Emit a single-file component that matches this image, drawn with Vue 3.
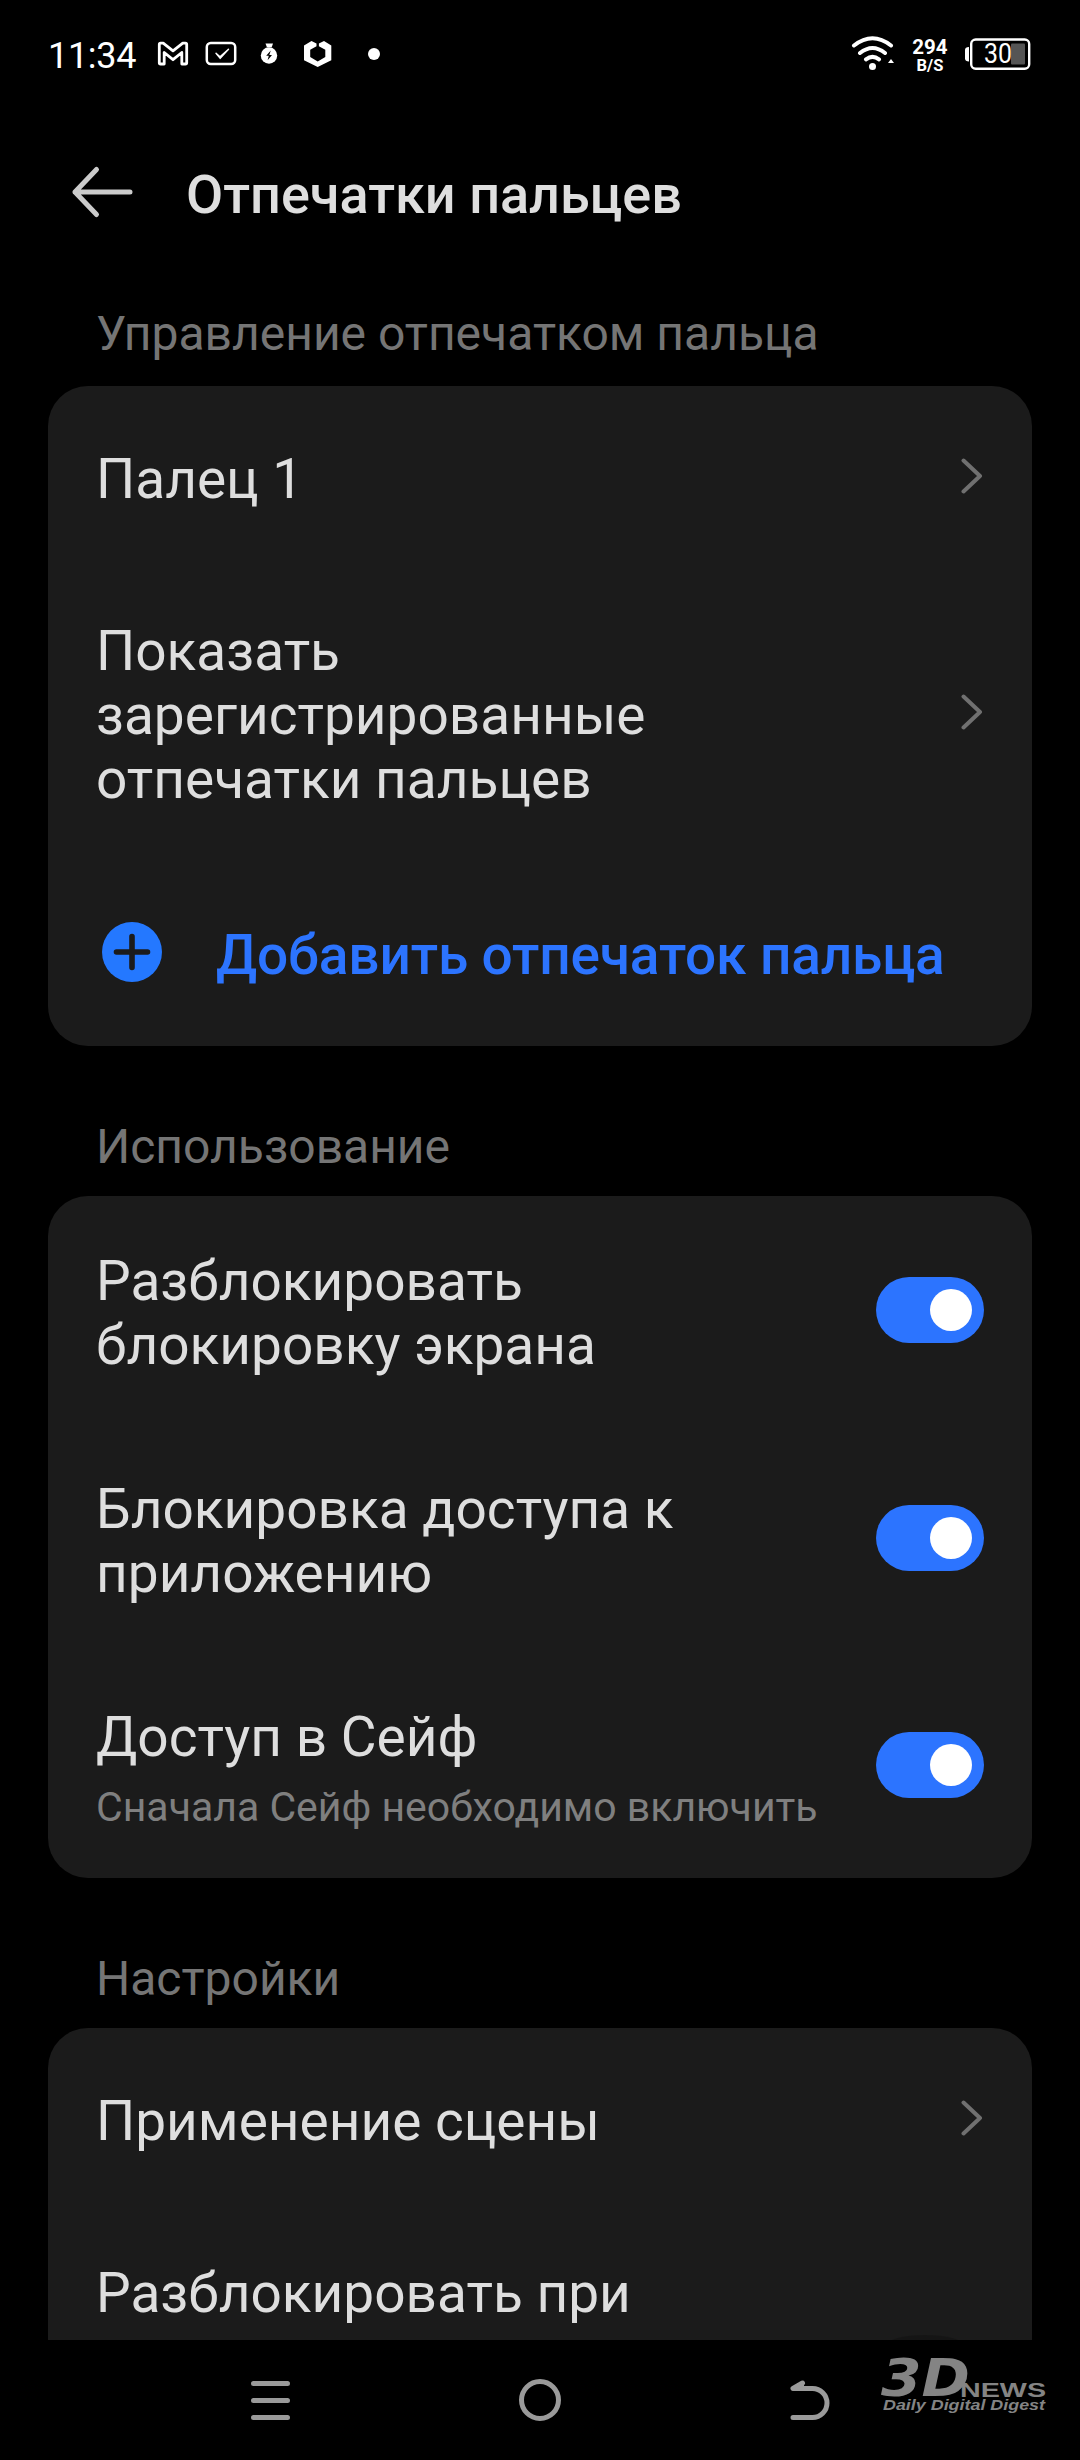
<template>
  <div class="screen">
    <!-- Status bar -->
    <div class="status-bar">
      <span class="time">11:34</span>
      <svg class="notifications" width="240" height="40" viewBox="150 34 240 40" fill="none" stroke="#fff">
        <path
          d="M159.3 44.5q0-1.3 1.3-1.3h2.6l9.8 7.7 9.8-7.7h2.6q1.3 0 1.3 1.3v18.2q0 1.3-1.3 1.3h-3.6V52.5L173 59.7l-8.8-7.2V64h-3.6q-1.3 0-1.3-1.3z"
          stroke-width="2.8"
          stroke-linejoin="round"
        />
        <rect x="206.8" y="43" width="28.4" height="21" rx="4" stroke-width="2.5" />
        <path d="M216 53.2l4 3.6 8.5-7.6-8.3 9.2z" fill="#fff" stroke-width="1.4" stroke-linejoin="round" />
        <g fill="#fff" stroke="none">
          <path d="M265.5 43.5h7.5l-1.3 3.7h-4.8z" />
          <circle cx="269" cy="55.5" r="8.2" />
          <path d="M270.8 50.5l-4.6 5.2h2.6l-1.2 4.6 4.4-5.4h-2.7z" fill="#000" />
          <path d="M311.5 41l5 2.6v2.6l-6.3 3.6v7.2l7.5 4.4 7.6-4.4v-7.2l-6.4-3.6v-2.6l5.1-2.6 7.3 4.4v14.8L317.7 67 304 60.2V45.4z" />
          <circle cx="374" cy="54" r="6" />
        </g>
      </svg>
      <div class="spacer"></div>
      <svg class="wifi" width="46" height="40" viewBox="850 34 46 40" fill="none" stroke="#fff" stroke-width="4">
        <path d="M854 45.5q18.500-14.500 37 0M860 53q12.500-10 25 0M866 59.300q6.500-4.800 13 0" stroke-linecap="round" />
        <circle cx="872.5" cy="66.5" r="3.5" fill="#fff" stroke="none" />
        <path d="M888 63l3-4 3 4z" fill="#fff" stroke="none" />
      </svg>
      <div class="speed">
        <span class="speed-value">294</span>
        <span class="speed-unit">B/S</span>
      </div>
      <svg class="battery" width="66" height="34" viewBox="965 37 66 34">
        <path d="M969 47v14.5q-4 0-4-3V50q0-3 4-3z" fill="#fff" />
        <rect x="1011" y="43.5" width="14" height="21" rx="1" fill="#555" />
        <rect x="971.2" y="39.5" width="58" height="29.2" rx="4.5" fill="none" stroke="#fff" stroke-width="2.4" />
        <text x="984" y="63" class="battery-text" textLength="28" lengthAdjust="spacingAndGlyphs">30</text>
      </svg>
    </div>

    <!-- Header -->
    <header class="header">
      <svg width="62" height="54" viewBox="0 0 62 54" class="back">
        <path d="M59 27H4M25.5 4.5L4 27l21.5 22.5" />
      </svg>
      <h1>Отпечатки пальцев</h1>
    </header>

    <!-- Settings sections -->
    <main class="content">
      <section v-for="section in sections" :key="section.title" class="section">
        <h2>{{ section.title }}</h2>
        <div class="card">
          <div v-for="row in section.rows" :key="row.label" :class="['row', row.type]">
            <svg v-if="row.type === 'add'" class="plus" width="60" height="60" viewBox="0 0 60 60">
              <circle cx="30" cy="30" r="30" fill="#2478ff" />
              <path d="M30 14.5v31M14.5 30h31" stroke="#1b1b1b" stroke-width="5.6" stroke-linecap="round" />
            </svg>
            <div class="text">
              <div class="label">{{ row.label }}</div>
              <div v-if="row.hint" class="hint">{{ row.hint }}</div>
            </div>
            <svg v-if="row.type === 'link'" class="chevron" width="22" height="36" viewBox="0 0 22 36">
              <path d="M2.5 2.5L19 18 2.5 33.5" />
            </svg>
            <button
              v-if="row.type === 'switch'"
              type="button"
              :class="['toggle', { on: row.on }]"
              @click="row.on = !row.on"
            >
              <span class="knob"></span>
            </button>
          </div>
        </div>
      </section>
    </main>

    <!-- Navigation bar -->
    <nav class="nav-bar">
      <svg width="44" height="44" viewBox="0 0 44 44"><path d="M4.5 5.5h34M4.5 22.5h34M4.5 39.5h34" /></svg>
      <svg width="44" height="44" viewBox="0 0 44 44"><circle cx="22" cy="22" r="18.5" /></svg>
      <svg width="44" height="44" viewBox="0 0 44 44">
        <path d="M15.5 5L6 10.5h19.5a14.5 14.5 0 0 1 0 29H6M8 10l6.5-3" />
      </svg>
    </nav>

    <!-- Watermark over the bottom right corner -->
    <svg class="watermark" width="168" height="85" viewBox="880 2330 168 85" fill="#848484">
      <ellipse cx="925" cy="2346" rx="40" ry="11" fill="#000" opacity="0.2" />
      <text x="881" y="2396" class="wm-logo" textLength="89" lengthAdjust="spacingAndGlyphs">3D</text>
      <text x="960" y="2396.5" class="wm-news" textLength="86" lengthAdjust="spacingAndGlyphs">NEWS</text>
      <text x="883" y="2409.5" class="wm-sub" textLength="162" lengthAdjust="spacingAndGlyphs">Daily Digital Digest</text>
    </svg>
  </div>
</template>

<script setup>
import { reactive } from 'vue'

const sections = reactive([
  {
    title: 'Управление отпечатком пальца',
    rows: [
      { type: 'link', label: 'Палец 1' },
      { type: 'link', label: 'Показать зарегистрированные отпечатки пальцев' },
      { type: 'add', label: 'Добавить отпечаток пальца' },
    ],
  },
  {
    title: 'Использование',
    rows: [
      { type: 'switch', label: 'Разблокировать блокировку экрана', on: true },
      { type: 'switch', label: 'Блокировка доступа к приложению', on: true },
      { type: 'switch', label: 'Доступ в Сейф', hint: 'Сначала Сейф необходимо включить', on: true },
    ],
  },
  {
    title: 'Настройки',
    rows: [
      { type: 'link', label: 'Применение сцены' },
      { type: 'plain', label: 'Разблокировать при' },
    ],
  },
])
</script>

<style>
body {
  background: #000;
}
</style>

<style scoped>
.screen {
  position: relative;
  display: flex;
  flex-direction: column;
  width: 1080px;
  height: 2460px;
  overflow: hidden;
  background: #000;
  color: #dedede;
  font-family: Roboto, 'Noto Sans', sans-serif;
}

.status-bar {
  display: flex;
  align-items: center;
  flex: none;
  height: 108px;
  padding: 0 49px 0 48px;
  box-sizing: border-box;
  color: #fff;
}

.time {
  width: 102px;
  font-size: 36px;
  line-height: 42px;
  letter-spacing: -0.3px;
  padding-top: 3px;
}

.spacer {
  flex: 1;
}

.speed {
  display: flex;
  flex-direction: column;
  align-items: center;
  width: 36px;
  margin: 5px 17px 0 16px;
  font-weight: 700;
}

.speed-value {
  font-size: 20.5px;
  line-height: 19px;
}

.speed-unit {
  font-size: 16.5px;
  line-height: 18px;
}

.battery-text {
  fill: #fff;
  font-size: 27px;
}

.header {
  display: flex;
  align-items: center;
  flex: none;
  height: 168px;
  padding-left: 71px;
  box-sizing: border-box;
}

.back {
  fill: none;
  stroke: #cbcbcb;
  stroke-width: 5;
  stroke-linecap: round;
  stroke-linejoin: round;
}

h1 {
  margin: 5px 0 0 53px;
  font-size: 54px;
  font-weight: 500;
  line-height: 62px;
}

.content {
  flex: 1;
  min-height: 0;
  padding: 0 48px;
  overflow: hidden;
}

.section h2 {
  height: 150px;
  margin: 0;
  padding: 73px 48px 0;
  box-sizing: border-box;
  font-size: 48px;
  font-weight: 400;
  line-height: 56px;
  color: #757575;
}

.section:first-child h2 {
  height: 110px;
  padding-top: 30px;
}

.card {
  border-radius: 40px;
  background: #1b1b1b;
}

.row {
  display: flex;
  align-items: center;
  justify-content: space-between;
  min-height: 180px;
  padding: 50px 48px;
  box-sizing: border-box;
}

.row.switch:last-child {
  height: 226px;
}

.row.plain {
  align-items: flex-start;
}

.row.add {
  justify-content: flex-start;
  min-height: 188px;
  padding-left: 54px;
  color: #2c74ff;
}

.text {
  width: 730px;
  position: relative;
  top: 3px;
}

.label {
  width: 640px;
  font-size: 55px;
  line-height: 64px;
}

.add .text {
  margin-left: 54px;
}

.add .label {
  width: auto;
  font-weight: 500;
  letter-spacing: -0.15px;
  white-space: nowrap;
}

.hint {
  margin-top: 14px;
  font-size: 41px;
  line-height: 48px;
  white-space: nowrap;
  color: #7f7f7f;
}

.chevron {
  margin-right: 1px;
  fill: none;
  stroke: #707070;
  stroke-width: 4;
  stroke-linecap: round;
  stroke-linejoin: round;
}

.toggle {
  display: flex;
  align-items: center;
  flex: none;
  width: 108px;
  height: 66px;
  padding: 0 12px;
  border: 0;
  border-radius: 33px;
  background: #444;
}

.toggle.on {
  justify-content: flex-end;
  background: #2c74ff;
}

.knob {
  width: 42px;
  height: 42px;
  border-radius: 50%;
  background: #fff;
}

.nav-bar {
  display: flex;
  align-items: center;
  justify-content: space-between;
  flex: none;
  height: 120px;
  padding: 0 249px;
  box-sizing: border-box;
  background: #000;
}

.nav-bar svg {
  fill: none;
  stroke: #9a9a9a;
  stroke-width: 5;
  stroke-linecap: round;
  stroke-linejoin: round;
}

.watermark {
  position: absolute;
  left: 880px;
  top: 2330px;
}

.wm-logo {
  font: italic 700 52px 'DejaVu Sans', sans-serif;
}

.wm-news {
  font: 700 21px 'Liberation Sans', sans-serif;
}

.wm-sub {
  font: italic 700 14px 'Liberation Sans', sans-serif;
}
</style>
